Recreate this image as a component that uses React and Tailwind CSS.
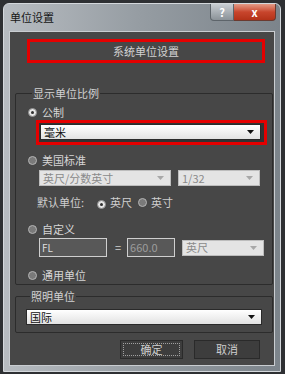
import React from 'react';

const font = { fontFamily: '"Noto Sans CJK SC", "Liberation Sans", sans-serif' };

// small radio dot like the old 3ds Max dialogs
const Radio = ({ on }) => (
  <span
    className={
      on
        ? 'inline-flex items-center justify-center w-[9px] h-[9px] rounded-full bg-[#e6e6e6] border border-[#8c8c8c]'
        : 'inline-flex items-center justify-center w-[9px] h-[9px] rounded-full bg-[#7a7a7a] border border-[#b4b4b4]'
    }
  >
    {on && <span className="w-[3px] h-[3px] rounded-full bg-[#303030]" />}
  </span>
);

const Arrow = ({ dim }) => (
  <svg width="7" height="4" viewBox="0 0 7 4" className="shrink-0">
    <path d="M0 0h7L3.5 4z" fill={dim ? '#a8a8a8' : '#111'} />
  </svg>
);

const Select = ({ text, w, dim }) => (
  <div
    className={
      dim
        ? 'h-[16px] flex items-center justify-between pl-[3px] pr-[6px] bg-[#e4e4e4] border border-[#bdbdbd] text-[#8a8a8a]'
        : 'h-[16px] flex items-center justify-between pl-[3px] pr-[6px] bg-gradient-to-b from-white to-[#e2e2e2] border border-[#2a2a2a] text-[#111]'
    }
    style={{ width: w }}
  >
    <span className="text-[11px] leading-none">{text}</span>
    <Arrow dim={dim} />
  </div>
);

const RadioRow = ({ on, label, className }) => (
  <div className={`flex items-center h-[14px] ${className}`}>
    <Radio on={on} />
    <span className="ml-[5px] text-[11px] leading-none text-[#d6d6d6]">{label}</span>
  </div>
);

export default function App() {
  return (
    <div className="w-[285px] h-[374px] bg-[#2e3033] pt-[3px] pl-[3px] overflow-hidden" style={font}>
      <div className="w-[278px] h-[369px] rounded-t-[6px] border border-[#d4d8dc] bg-gradient-to-r from-[#b7bcc1] via-[#959ca2] to-[#7c848b] flex flex-col">
        {/* title bar */}
        <div className="h-[27px] flex items-start justify-between pl-[6px] pr-[4px]">
          <span className="mt-[8px] text-[11px] leading-none text-[#151515]">单位设置</span>
          <div className="flex">
            <div className="w-[24px] h-[17px] rounded-bl-[4px] border border-[#5d646a] border-t-0 bg-gradient-to-b from-[#c9ced3] to-[#8b9298] flex items-center justify-center text-[11px] font-bold text-white leading-none">
              ?
            </div>
            <div className="w-[42px] h-[17px] rounded-br-[4px] border border-[#6a3a30] border-t-0 border-l-0 bg-gradient-to-b from-[#e39a86] via-[#c8452c] to-[#b33218] flex items-center justify-center text-[11px] font-bold text-white leading-none">
              x
            </div>
          </div>
        </div>

        {/* client area */}
        <div className="mx-[5px] h-[335px] border border-[#c9cdd1] bg-[#474747] flex flex-col px-[5px]">
          <div className="mt-[7px] ml-[12px] w-[238px] h-[24px] border-[3px] border-[#e40000] flex items-center justify-center text-[11px] text-[#d2d2d2]">
            系统单位设置
          </div>

          <fieldset className="mt-[23px] w-[258px] border border-[#2c2c2c] rounded-[2px] pb-[2px] pl-[12px]">
            <legend className="ml-[4px] px-[1px] text-[11px] leading-[14px] text-[#d2d2d2]">显示单位比例</legend>
            <RadioRow on label="公制" className="mt-[5px]" />
            <div className="mt-[1px] ml-[8px] w-[231px] h-[25px] border-[3px] border-[#e40000] bg-[#333] p-[1px]">
              <Select text="毫米" w={221} />
            </div>
            <RadioRow label="美国标准" className="mt-[8px]" />
            <div className="mt-[3px] ml-[11px] flex gap-[7px]">
              <Select text="英尺/分数英寸" w={132} dim />
              <Select text="1/32" w={82} dim />
            </div>
            <div className="mt-[9px] ml-[9px] flex items-center h-[14px] text-[11px] leading-none text-[#cfcfcf]">
              <span>默认单位:</span>
              <span className="ml-[13px]"><Radio on /></span>
              <span className="ml-[4px]">英尺</span>
              <span className="ml-[6px]"><Radio /></span>
              <span className="ml-[4px]">英寸</span>
            </div>
            <RadioRow label="自定义" className="mt-[13px]" />
            <div className="mt-[2px] ml-[11px] flex items-center">
              <div className="w-[68px] h-[19px] border border-[#cfcfcf] bg-[#585858] flex items-center pl-[2px] text-[10px] text-[#dedede]">
                FL
              </div>
              <span className="ml-[8px] mr-[6px] text-[11px] text-[#cfcfcf]">=</span>
              <div className="w-[48px] h-[19px] border border-[#cfcfcf] bg-[#585858] flex items-center pl-[2px] text-[11px] text-[#9d9d9d]">
                660.0
              </div>
              <div className="ml-[7px]">
                <Select text="英尺" w={82} dim />
              </div>
            </div>
            <RadioRow label="通用单位" className="mt-[11px]" />
          </fieldset>

          <fieldset className="mt-[4px] w-[258px] border border-[#2c2c2c] rounded-[2px] pb-[7px] pl-[10px]">
            <legend className="ml-[4px] px-[1px] text-[11px] leading-[14px] text-[#d2d2d2]">照明单位</legend>
            <div className="mt-[6px]">
              <Select text="国际" w={236} />
            </div>
          </fieldset>

          <div className="mt-[7px] flex justify-end gap-[11px] pr-[9px]">
            <div className="w-[63px] h-[19px] border border-[#2a2a2a] bg-[#3d3d3d] flex items-center justify-center p-[2px]">
              <div className="w-full h-full border border-dotted border-[#a0a0a0] flex items-center justify-center text-[11px] text-[#cfcfcf]">
                确定
              </div>
            </div>
            <div className="w-[66px] h-[19px] border border-[#2a2a2a] bg-[#3d3d3d] flex items-center justify-center text-[11px] text-[#cfcfcf]">
              取消
            </div>
          </div>
        </div>
      </div>
    </div>
  );
}
